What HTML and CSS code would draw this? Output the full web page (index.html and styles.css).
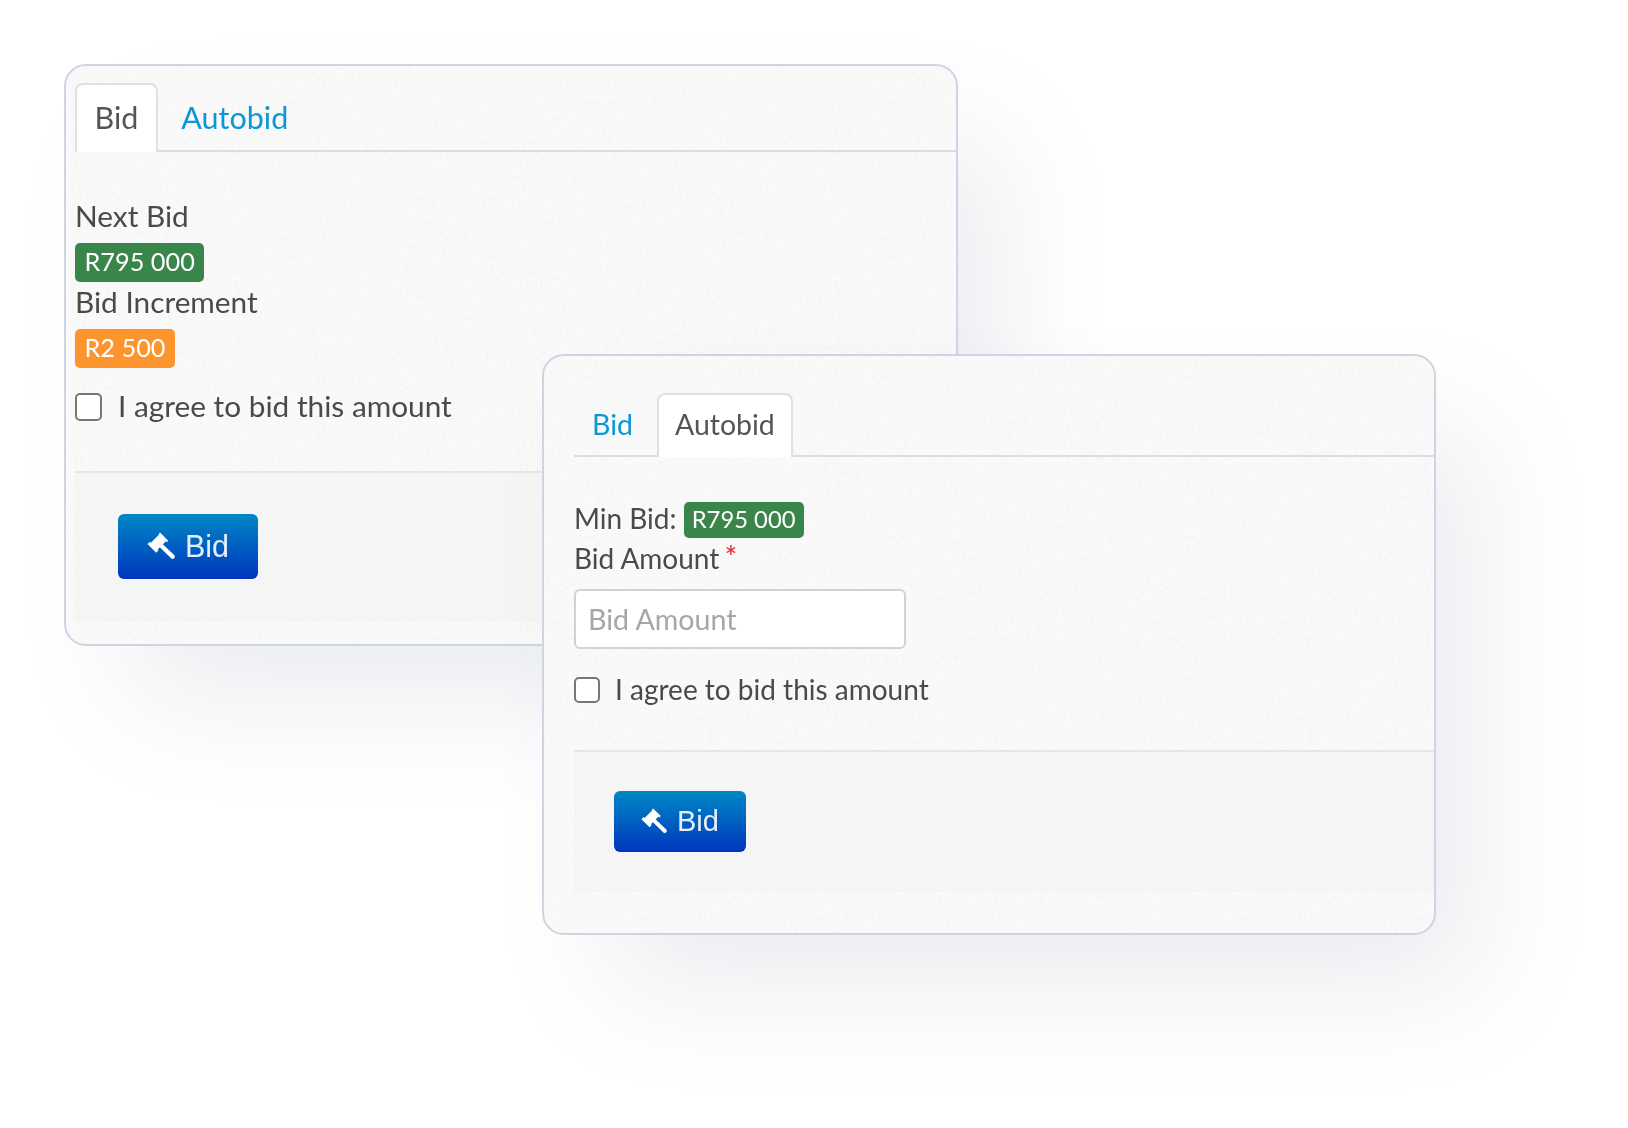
FILE: index.html
```html
<!DOCTYPE html>
<html lang="en">
<head>
  <meta charset="UTF-8" />
  <title>Bid and Autobid</title>
  <link rel="stylesheet" href="styles.css">
</head>
<body>

  <!-- Bid tab card -->
  <section class="card card-bid">
    <div class="tabs">
      <a class="tab active" href="#">Bid</a>
      <a class="tab" href="#">Autobid</a>
    </div>
    <div class="card-body">
      <div class="line">Next Bid</div>
      <div class="badge-row"><span class="badge green">R795 000</span></div>
      <div class="line">Bid Increment</div>
      <div class="badge-row"><span class="badge orange">R2 500</span></div>
      <label class="agree"><input type="checkbox"> <span>I agree to bid this amount</span></label>
    </div>
    <div class="card-footer">
      <button class="bid-btn">
        <svg class="gavel" viewBox="0 0 30 30"><use href="#gavel"/></svg>
        Bid
      </button>
    </div>
  </section>

  <!-- Autobid tab card -->
  <section class="card card-auto">
    <div class="tabs">
      <a class="tab" href="#">Bid</a>
      <a class="tab active" href="#">Autobid</a>
    </div>
    <div class="card-body">
      <div class="line">Min Bid: <span class="badge green">R795 000</span></div>
      <div class="line">Bid Amount <span class="req">*</span></div>
      <input class="amount" type="text" placeholder="Bid Amount">
      <label class="agree"><input type="checkbox"> <span>I agree to bid this amount</span></label>
    </div>
    <div class="card-footer">
      <button class="bid-btn">
        <svg class="gavel" viewBox="0 0 30 30"><use href="#gavel"/></svg>
        Bid
      </button>
    </div>
  </section>

  <svg class="defs" width="0" height="0">
    <symbol id="gavel" viewBox="0 0 30 30">
      <path fill="#fff" d="M13.5 .5 L22 9 L20.5 10.5 L19.5 9.5 L11 18 L12 19 L9.5 21.5 L.5 12.5 L3 10 L4 11 L12.5 2.5 L12 2 Z"/>
      <path fill="none" stroke="#fff" stroke-width="4.5" stroke-linecap="round" d="M14 13.5 L26.5 25.5"/>
    </symbol>
  </svg>

</body>
</html>
```
FILE: styles.css
```css
body {
  margin: 0;
  height: 1128px;
  overflow: hidden;
  background: #fff;
  font-family: 'Lato', sans-serif;
  color: #4a4a4a;
}

.defs {
  position: absolute;
}

/* the two cards float on the canvas and overlap */
.card {
  position: absolute;
  box-sizing: border-box;
  width: 894px;
  height: 582px;
  border: 2px solid #cfd4e3;
  border-radius: 22px;
  background-color: #fafafa;
  background-image: url("data:image/svg+xml,%3Csvg xmlns='http://www.w3.org/2000/svg' width='300' height='300'%3E%3Cfilter id='n'%3E%3CfeTurbulence type='fractalNoise' baseFrequency='.35 .2' numOctaves='3' seed='4'/%3E%3CfeColorMatrix values='0 0 0 0 .5 0 0 0 0 .5 0 0 0 0 .5 .09 .09 0 0 -.07'/%3E%3C/filter%3E%3Crect width='300' height='300' filter='url(%23n)'/%3E%3C/svg%3E");
  box-shadow: 55px 65px 120px -15px rgba(90, 100, 130, 0.12);
  overflow: hidden;
}

/* the picture is a slightly soft capture */
.tabs,
.card-body,
.card-footer {
  filter: blur(0.45px);
}

.card-bid {
  left: 64px;
  top: 64px;
  padding-left: 9px;
  font-size: 29.8px;
}

.card-auto {
  left: 542px;
  top: 354px;
  height: 581px;
  padding-left: 30px;
  font-size: 28px;
}

.tabs {
  display: flex;
  border-bottom: 2px solid #dcdde0;
  height: 67px;
}

.card-bid .tabs {
  margin-top: 17px;
}

.card-auto .tabs {
  margin-top: 37px;
  height: 62px;
}

.tab {
  box-sizing: border-box;
  height: calc(100% + 2px);
  padding: 0 17.5px 4px;
  border: 2px solid transparent;
  border-bottom: 0;
  border-radius: 8px 8px 0 0;
  color: #0a97d6;
  font-size: 30.5px;
  text-decoration: none;
  display: flex;
  align-items: center;
}

.tab + .tab {
  margin-left: 4px;
}

.tab.active {
  background: #fff;
  border-color: #dfe0e2;
  color: #555;
}

.card-auto .tab {
  padding: 0 16px 5px;
  font-size: 28.5px;
}

.card-auto .tab + .tab {
  margin-left: 6px;
}

.card-bid .card-body {
  padding-top: 37px;
  height: 319px;
  box-sizing: border-box;
}

.card-auto .card-body {
  padding-top: 41px;
  height: 293px;
  box-sizing: border-box;
}

.line {
  line-height: 54px;
}

.card-auto .line {
  line-height: 40px;
}

.badge-row {
  line-height: 0;
  height: 32px;
}

.badge {
  display: inline-block;
  box-sizing: border-box;
  padding: 0 9.5px;
  height: 39px;
  line-height: 37px;
  border-radius: 5px;
  color: #fff;
  font-size: 25.3px;
}

.badge.green {
  background: #3a864a;
}

.badge.orange {
  background: #fd952e;
}

.card-auto .badge {
  height: 36px;
  line-height: 34px;
  padding: 0 8px;
  font-size: 23.8px;
  vertical-align: 1px;
}

.req {
  color: #e8262d;
  font-size: 30px;
  line-height: 0;
  vertical-align: 1px;
  margin-left: -2px;
}

.amount {
  display: block;
  box-sizing: border-box;
  width: 332px;
  height: 60px;
  margin: 11px 0 23px;
  padding: 0 12px;
  border: 2px solid #d2d2d2;
  border-radius: 6px;
  background: #fff;
  font-family: 'Lato', sans-serif;
  font-size: 28.6px;
}

.amount::placeholder {
  color: #a6a6a6;
}

.agree {
  display: flex;
  align-items: center;
  margin-top: 27px;
}

.agree input {
  appearance: none;
  box-sizing: border-box;
  width: 27px;
  height: 28px;
  margin: 2px 16px 0 0;
  border: 2px solid #777;
  border-radius: 5px;
  background: #fff;
}

.card-auto .agree {
  margin-top: 0;
}

.card-auto .agree input {
  width: 26px;
  height: 26px;
  margin: 2px 15px 0 0;
}

.card-footer {
  box-sizing: border-box;
  height: 151px;
  padding: 41px 0 0 43px;
  border-top: 2px solid #e6e6e6;
  background: #f5f5f5;
}

.card-auto .card-footer {
  height: 142px;
  padding: 39px 0 0 40px;
}

.bid-btn {
  display: flex;
  align-items: center;
  justify-content: center;
  gap: 9px;
  width: 140px;
  height: 65px;
  padding: 0;
  border: 0;
  border-radius: 6px;
  background: linear-gradient(#0088c6, #0036bd);
  color: #e6eefa;
  font-family: 'Liberation Sans', sans-serif;
  font-size: 30.5px;
}

.card-auto .bid-btn {
  width: 132px;
  height: 61px;
  font-size: 29px;
}

.gavel {
  width: 29px;
  height: 29px;
}

.card-auto .gavel {
  width: 27px;
  height: 27px;
}
```
